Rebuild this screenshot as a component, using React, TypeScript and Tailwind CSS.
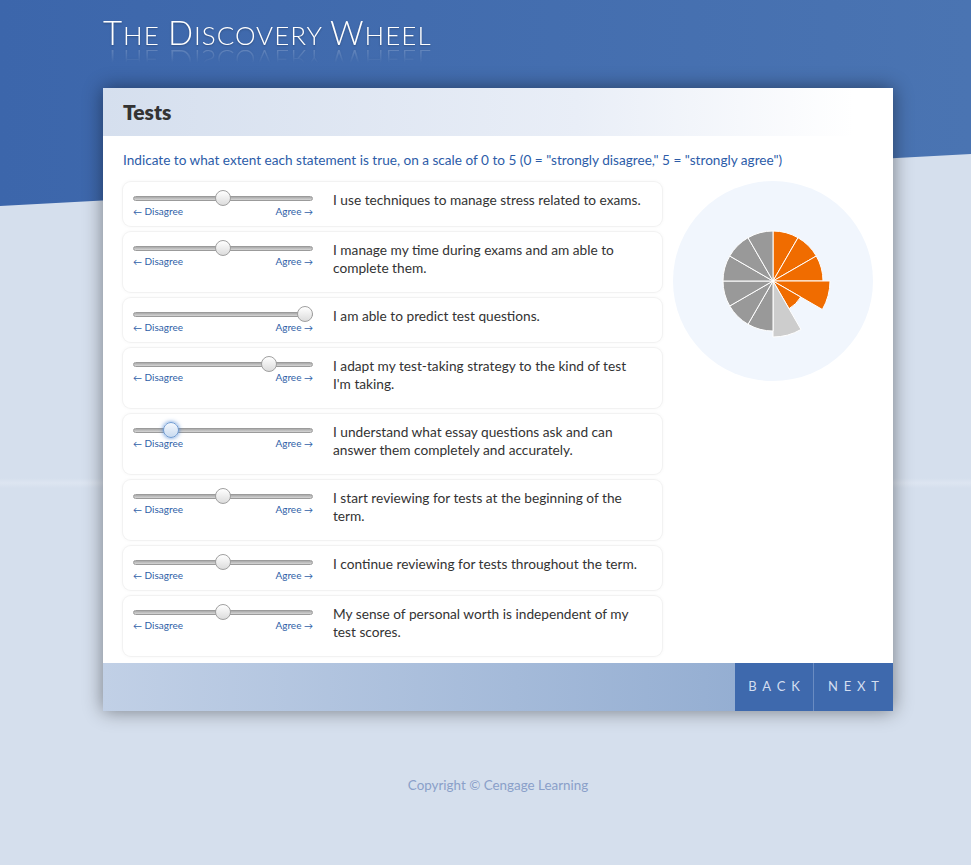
import { useState } from "react"

const statements = [
  { text: "I use techniques to manage stress related to exams.", value: 2.5 },
  { text: "I manage my time during exams and am able to complete them.", value: 2.5 },
  { text: "I am able to predict test questions.", value: 5 },
  { text: "I adapt my test-taking strategy to the kind of test I'm taking.", value: 3.9 },
  { text: "I understand what essay questions ask and can answer them completely and accurately.", value: 0.92 },
  { text: "I start reviewing for tests at the beginning of the term.", value: 2.5 },
  { text: "I continue reviewing for tests throughout the term.", value: 2.5 },
  { text: "My sense of personal worth is independent of my test scores.", value: 2.5 },
]

// wheel slices, clockwise from 12 o'clock
const slices = [
  { r: 50, fill: "#f06c00" },
  { r: 50, fill: "#f06c00" },
  { r: 50, fill: "#f06c00" },
  { r: 57, fill: "#f06c00" },
  { r: 32, fill: "#f06c00" },
  { r: 56, fill: "#cdcdcd" },
  { r: 50, fill: "#999999" },
  { r: 50, fill: "#999999" },
  { r: 50, fill: "#999999" },
  { r: 50, fill: "#999999" },
  { r: 50, fill: "#999999" },
  { r: 50, fill: "#999999" },
]

function Wheel() {
  const cx = 100
  const cy = 100
  return (
    <svg width="200" height="200" viewBox="0 0 200 200">
      <circle cx={cx} cy={cy} r={100} fill="#f1f6fd" />
      {slices.map((s, i) => {
        const a0 = ((i * 30 - 90) * Math.PI) / 180
        const a1 = (((i + 1) * 30 - 90) * Math.PI) / 180
        const x0 = cx + s.r * Math.cos(a0)
        const y0 = cy + s.r * Math.sin(a0)
        const x1 = cx + s.r * Math.cos(a1)
        const y1 = cy + s.r * Math.sin(a1)
        return (
          <path
            key={i}
            d={`M${cx},${cy} L${x0},${y0} A${s.r},${s.r} 0 0 1 ${x1},${y1} Z`}
            fill={s.fill}
            stroke="#ffffff"
            strokeWidth="1"
          />
        )
      })}
    </svg>
  )
}

function Slider({ value, focused }: { value: number; focused?: boolean }) {
  return (
    <div className="relative w-[180px] h-[26px] shrink-0">
      <div className="absolute left-0 right-0 top-[5px] h-[5px] rounded-full border border-[#9b9b9b] bg-gradient-to-b from-[#a9a9a9] to-[#d6d6d6]" />
      <div
        className={
          focused
            ? "absolute top-[-1px] w-[16px] h-[16px] rounded-full border border-[#6f9bd2] bg-gradient-to-b from-[#f4f8fd] to-[#c9dbf0] shadow-[0_0_4px_rgba(70,130,210,0.9)]"
            : "absolute top-[-1px] w-[16px] h-[16px] rounded-full border border-[#a0a0a0] bg-gradient-to-b from-white to-[#dcdcdc]"
        }
        style={{ left: value * 32.8 }}
      />
      <div className="absolute left-0 right-0 top-[14px] flex justify-between text-[10px] leading-[12px] text-[#2f5fa8]">
        <span>
          <span className="text-[9px]">←</span> Disagree
        </span>
        <span>
          Agree <span className="text-[9px]">→</span>
        </span>
      </div>
    </div>
  )
}

export default function App() {
  const [values] = useState(statements.map((s) => s.value))

  return (
    <div className="relative min-h-[865px] bg-[#d5dfed] overflow-hidden font-['Lato',sans-serif]">
      {/* blue slanted header backdrop */}
      <div className="absolute inset-x-0 top-0 h-[210px] bg-gradient-to-r from-[#3c66ab] to-[#4a74b2] [clip-path:polygon(0_0,100%_0,100%_154px,0_206px)]" />
      <div className="absolute inset-x-0 top-[478px] h-[10px] bg-gradient-to-b from-transparent via-[#dde5f1] to-transparent" />

      <div className="relative w-[790px] ml-[103px]">
        {/* title, mirrored below like the original */}
        <div className="pt-[14px] h-[88px]">
          <h1 className="inline-block h-[36px] leading-[36px] whitespace-nowrap text-white font-light tracking-[1px] [text-shadow:0_1px_2px_rgba(0,0,0,0.25)] [-webkit-box-reflect:below_-5px_linear-gradient(transparent_50%,rgba(255,255,255,0.25))]">
            <span className="text-[33px]">T</span>
            <span className="text-[26px]">HE </span>
            <span className="text-[33px]">D</span>
            <span className="text-[26px]">ISCOVERY </span>
            <span className="text-[33px]">W</span>
            <span className="text-[26px]">HEEL</span>
          </h1>
        </div>

        {/* card */}
        <div className="bg-white shadow-[0_0_18px_rgba(0,0,0,0.45)]">
          <div className="h-[48px] flex items-center px-[20px] bg-gradient-to-r from-[#d5dfee] via-[#e9eef7] via-60% to-white to-95%">
            <h2 className="text-[21px] font-extrabold text-[#333333]">Tests</h2>
          </div>

          <div className="px-[20px] pt-[15px] pb-[7px]">
            <p className="text-[13.6px] leading-[18px] text-[#2c5ca8]">
              Indicate to what extent each statement is true, on a scale of 0 to 5 (0 = "strongly disagree," 5 = "strongly agree")
            </p>

            <div className="mt-[13px] flex gap-[11px]">
              <div className="w-[539px] flex flex-col gap-[6px]">
                {statements.map((s, i) => (
                  <div
                    key={i}
                    className="flex items-start gap-[20px] px-[10px] py-[9px] rounded-[8px] bg-white shadow-[0_0_0_1px_#f2f2f2,0_0_4px_rgba(0,0,0,0.06)]"
                  >
                    <Slider value={values[i]} focused={i === 4} />
                    <p className="w-[312px] pb-[6px] text-[13.7px] leading-[18px] text-[#333333]">{s.text}</p>
                  </div>
                ))}
              </div>
              <div className="w-[200px] shrink-0 -mt-[1px]">
                <Wheel />
              </div>
            </div>
          </div>

          <div className="h-[48px] flex justify-end bg-gradient-to-r from-[#c1d0e6] to-[#8aa6cd]">
            <button className="w-[79px] bg-[#3e69ad] text-[#d3def0] text-[13px] tracking-[0.45em] pl-[0.45em] border-r border-[#6a8cc2]">
              BACK
            </button>
            <button className="w-[79px] bg-[#3e69ad] text-[#d3def0] text-[13px] tracking-[0.45em] pl-[0.45em]">
              NEXT
            </button>
          </div>
        </div>

        <p className="mt-[64px] text-center text-[13.4px] text-[#8aa0c9]">Copyright © Cengage Learning</p>
      </div>
    </div>
  )
}
